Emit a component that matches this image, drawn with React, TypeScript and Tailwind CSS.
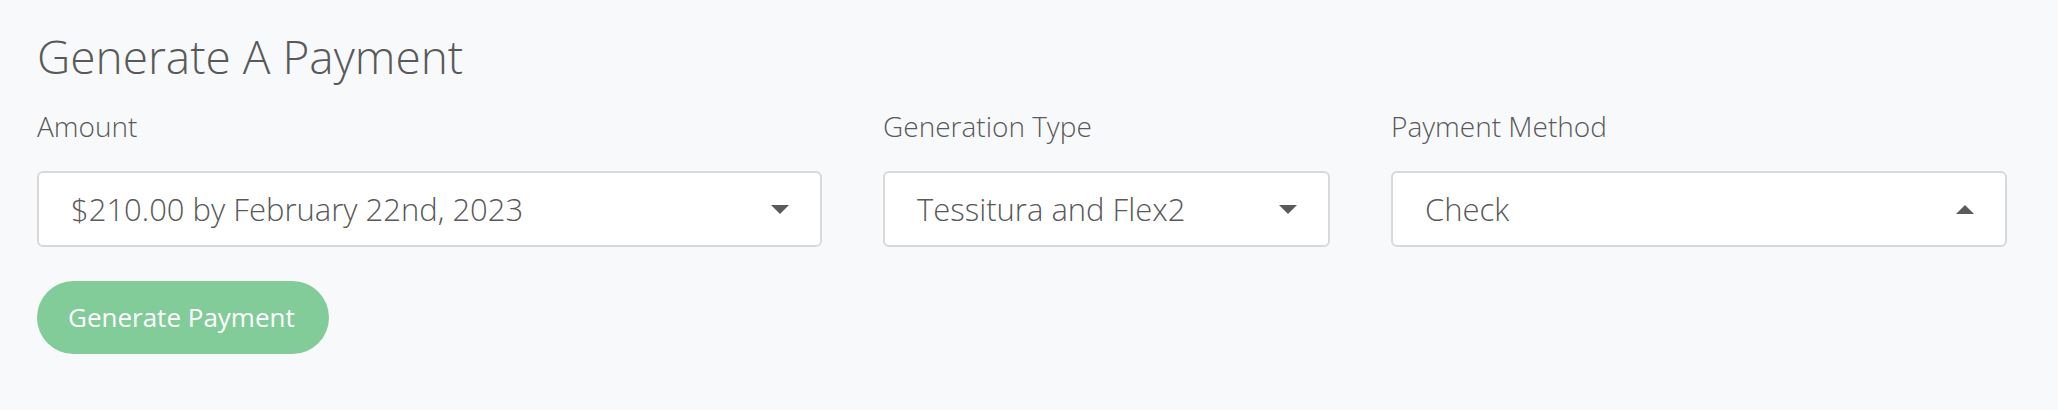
import React from "react";

function Caret({ up }: { up?: boolean }) {
  return (
    <svg width="18" height="9" viewBox="0 0 18 9" className="shrink-0">
      {up ? <polygon points="0,9 18,9 9,0" fill="#5b5b5b" /> : <polygon points="0,0 18,0 9,9" fill="#5b5b5b" />}
    </svg>
  );
}

function Field({ label, value, up, className }: { label: string; value: string; up?: boolean; className: string }) {
  return (
    <div className={className}>
      <div className="text-[28px] leading-[28px] font-light text-[#595959]">{label}</div>
      <div className="mt-[31px] flex h-[76px] items-center justify-between rounded-[6px] border-2 border-[#d9d9d9] bg-white pl-[32px] pr-[31px]">
        <span className="text-[31px] leading-[31px] font-light text-[#595959]">{value}</span>
        <Caret up={up} />
      </div>
    </div>
  );
}

export default function App() {
  return (
    <div
      className="h-[410px] w-full bg-[#f8f9fb] pl-[37px] pr-[51px] pt-[34px]"
      style={{ fontFamily: "'Open Sans', Lato, sans-serif" }}
    >
      <h1 className="text-[46px] leading-[44px] font-light text-[#595959]">Generate A Payment</h1>
      <div className="mt-[34px] flex gap-[61px]">
        <Field className="w-[785px]" label="Amount" value="$210.00 by February 22nd, 2023" />
        <Field className="w-[447px]" label="Generation Type" value="Tessitura and Flex2" />
        <Field className="flex-1" label="Payment Method" value="Check" up />
      </div>
      <button className="mt-[34px] flex h-[73px] w-[292px] items-center rounded-full bg-[#82cc9a] pl-[31px] text-[26px] font-normal text-white">
        Generate Payment
      </button>
    </div>
  );
}
